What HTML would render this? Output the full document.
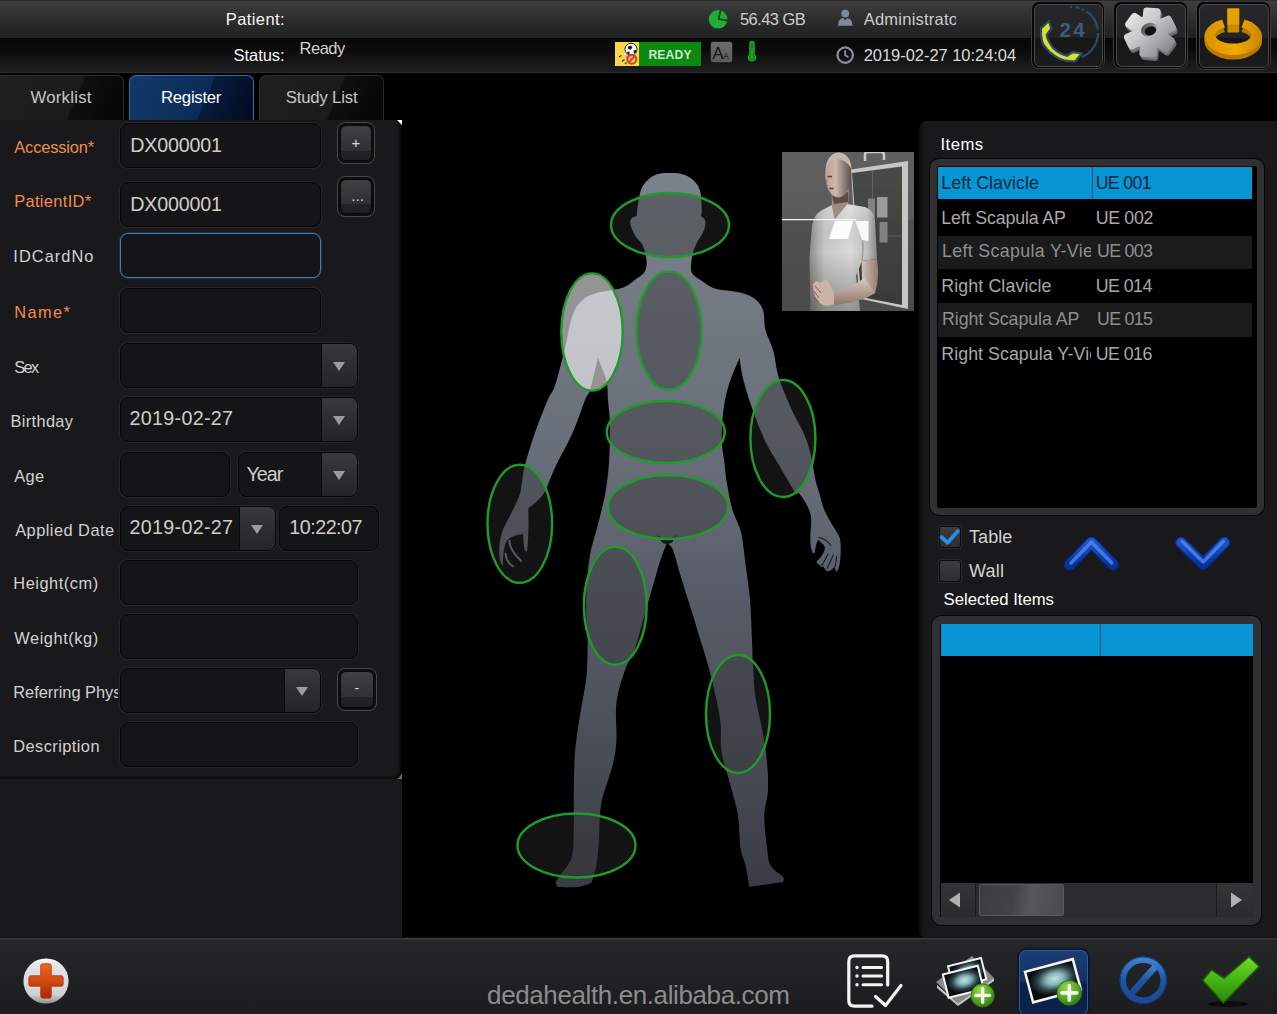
<!DOCTYPE html>
<html lang="en">
<head>
<meta charset="utf-8">
<title>Register</title>
<style>
html,body{margin:0;padding:0;background:#000;}
body{width:1277px;height:1014px;position:relative;overflow:hidden;font-family:"Liberation Sans","DejaVu Sans",sans-serif;color:#d8d8d8;}
.abs{position:absolute;}
.t{position:absolute;white-space:nowrap;}
#topbar{left:0;top:0;width:1277px;height:73px;background:linear-gradient(#2a2a2a 0,#2a2a2a 1px,#3e3e3e 1.5px,#363636 10px,#2b2c2c 20px,#202322 37.5px,#080808 38px,#0b0b0b 50px,#151515 60px,#1f1f1f 72px,#2c2c2c 72.5px);}
.tab{position:absolute;top:75px;height:45px;border:1px solid #2c2c2c;border-bottom:none;border-radius:7px 7px 0 0;box-sizing:border-box;background:linear-gradient(113deg,#202020 0,#1b1b1b 60%,#0f0f0f 60.5%,#050505 100%);}
.tab.sel{background:linear-gradient(113deg,#113a68 0,#0b2c58 60%,#061c3e 60.5%,#020b1e 100%);border-color:#2c6fae;}
#left{left:0;top:120px;width:401px;height:659px;background:#19191b;border-radius:0 0 6px 0;box-shadow:inset -2px -2px 3px rgba(0,0,0,.55);}
#leftlow{left:0;top:779px;width:402px;height:159px;background:#1a1a1c;}
#right{left:919px;top:121px;width:358px;height:817px;background:linear-gradient(90deg,#0c0c0d 0,#151517 3px,#19191b 8px);border-radius:8px 0 0 7px;}
#bottom{left:0;top:937px;width:1277px;height:77px;background:linear-gradient(#101011 0,#101011 1px,#3a3a3c 1px,#3a3a3c 2px,#252628 3px,#222325 30px,#1c1c1e 77px);}
.inp{position:absolute;box-sizing:border-box;background:#151517;border:1px solid #060606;border-radius:8px;box-shadow:0 0 0 1px #262628;overflow:hidden;}
.arrow{position:absolute;right:0;top:0;bottom:0;width:35px;background:linear-gradient(#39393b,#2e2e30 50%,#252527);border-left:1px solid #0a0a0a;}
.arrow:after{content:"";position:absolute;left:50%;top:50%;margin:-4px 0 0 -6.5px;border:6.5px solid transparent;border-top:9px solid #9c9c9c;border-bottom:none;}
.sbtn{position:absolute;box-sizing:border-box;border:1px solid #48484a;border-radius:8px;background:#0e0e0f;}
.sbtn i{position:absolute;left:2px;top:2px;right:2px;bottom:2px;border-radius:6px;background:linear-gradient(#404043 0,#303032 72%,#232325 73%,#202022 100%);border:1px solid #080808;}
.lbox{position:absolute;box-sizing:border-box;border:7px solid #2f3032;border-radius:9px;background:#000;box-shadow:0 0 0 1px #060606;}
.chk{position:absolute;width:22px;height:22px;box-sizing:border-box;border:1px solid #0b0b0b;border-radius:3px;background:linear-gradient(#3c3c3e,#2e2e30);box-shadow:0 0 0 1px #2a2a2c;}
.tbtn{position:absolute;top:1px;width:74px;height:68px;box-sizing:border-box;border:1px solid #3c3c3e;border-radius:8px;background:#060606;}
.tbtn i{position:absolute;left:1.5px;top:1.5px;right:1.5px;bottom:1.5px;border-radius:6px;border:1px solid #48484a;background:linear-gradient(#272729 0,#232325 53%,#171718 54%,#1b1b1c 100%);}
</style>
</head>
<body>
<div class="abs" id="topbar"></div>
<div class="t" style="left:225.80px;top:10.73px;font-size:16.5px;line-height:1;letter-spacing:0.404px;color:#f6f6f6;">Patient:</div><div class="t" style="left:233.60px;top:46.93px;font-size:16.5px;line-height:1;letter-spacing:-0.063px;color:#f6f6f6;">Status:</div><div class="t" style="left:299.60px;top:40.03px;font-size:16.5px;line-height:1;letter-spacing:-0.511px;color:#d0d0d0;">Ready</div><div class="t" style="left:740.00px;top:10.83px;font-size:16.5px;line-height:1;letter-spacing:-0.573px;color:#cdcdcd;">56.43 GB</div><div class="t" style="left:863.70px;top:10.73px;font-size:16.5px;line-height:1;letter-spacing:0.236px;color:#cdcdcd;width:92.1px;overflow:hidden;padding-bottom:6px;">Administrator</div><div class="t" style="left:863.70px;top:46.83px;font-size:16.5px;line-height:1;letter-spacing:-0.041px;color:#dadada;">2019-02-27 10:24:04</div>
<svg class="abs" style="left:706px;top:7px" width="26" height="26" viewBox="0 0 26 26"><circle cx="12.1" cy="12.3" r="9.3" fill="#1cae35"/><path d="M12.6 12 L14.4 3.6 M12.6 12 L21.4 13.6" stroke="#0d3a14" stroke-width="1.7" fill="none"/></svg>
<svg class="abs" style="left:835px;top:6px" width="22" height="24" viewBox="0 0 22 24"><circle cx="10.2" cy="7.6" r="3.9" fill="#7f879a"/><path d="M3 19.8 C3 13.5 6 12 10.2 12 C14.5 12 17.4 13.5 17.4 19.8Z" fill="#7f879a"/><path d="M8.3 12 L10.2 14.4 L12.1 12Z" fill="#2a2a2a"/></svg>
<div class="abs" style="left:615px;top:42px;width:24px;height:24px;background:#f8d848;"></div>
<div class="abs" style="left:639px;top:42px;width:62px;height:24px;background:#0c8a10;"></div>
<svg class="abs" style="left:615px;top:42px" width="25" height="24" viewBox="0 0 25 24"><path d="M4 15 L6.5 13.5 M7 19.5 L9.5 17.5 M10 22 L11.5 20.5" stroke="#3a2a10" stroke-width="1.1"/><path d="M9 12 L13 10 L13 16Z" fill="#fff"/><ellipse cx="14.5" cy="14.5" rx="4.2" ry="3.8" fill="#f2a8b0"/><circle cx="16" cy="7.2" r="6" fill="#fafafa" stroke="#222" stroke-width="1"/><path d="M13 4.5 l3 -1 l1.5 2.2 l-2 2 l-2.5 -1Z M18.5 8.5 l2.5 -.5 l.3 2.5 l-2.3 1Z M12 10 l2 -.5 l1 2 l-2 .8Z" fill="#1a1a1a"/><circle cx="16.8" cy="17.2" r="4.5" fill="none" stroke="#dc3a1c" stroke-width="1.9"/><path d="M13.7 20.3 L19.9 14.1" stroke="#dc3a1c" stroke-width="1.9"/></svg>
<div class="t" style="left:648.40px;top:48.51px;font-size:12.1px;line-height:1;letter-spacing:0.183px;color:#cfe8cf;font-weight:bold;">READY</div>
<div class="abs" style="left:711px;top:42px;width:20.500px;height:20px;background:linear-gradient(#6c6c6c,#5c5c5c);border-radius:2px;box-shadow:0 0 0 .5px #3a3a3a;"></div>
<div class="t" style="left:712.500px;top:44px;font-size:16.500px;color:#141414;line-height:18px;">A<span style="font-size:8.500px;margin-left:-.5px;">A</span></div>
<svg class="abs" style="left:745px;top:40px" width="14" height="24" viewBox="0 0 14 24"><path d="M5 3.5 a2 2 0 0 1 4 0 V14.5 a3.6 3.6 0 1 1 -4 0Z" fill="#117a1a" stroke="#17a523" stroke-width="1.5"/><path d="M7 8 V17" stroke="#17a523" stroke-width="1.6"/><circle cx="7" cy="17.6" r="1.8" fill="#17a523"/></svg>
<svg class="abs" style="left:834px;top:44px" width="22" height="22" viewBox="0 0 22 22"><circle cx="11.2" cy="11.1" r="7.7" fill="none" stroke="#8c919b" stroke-width="2.2"/><path d="M11.2 6.3 V11.3 L14.5 13.3" fill="none" stroke="#8c919b" stroke-width="1.8"/></svg>
<div class="tbtn" style="left:1031px;"><i></i></div>
<div class="tbtn" style="left:1113px;width:75px;"><i></i></div>
<div class="tbtn" style="left:1196px;width:75px;height:69px;"><i></i></div>

<svg class="abs" style="left:1031px;top:2px" width="73" height="67" viewBox="0 0 73 67"><g fill="none" stroke="#2f4b6b" stroke-width="2.2"><path d="M39 5.1 A26 26 0 0 1 41 5" stroke-dasharray="2 2"/><path d="M44.5 5.2 A26 26 0 0 1 53 8" stroke-dasharray="4 2.5"/><path d="M55.5 9.4 A26 26 0 0 1 66.8 27.5"/><path d="M67 31 A26 26 0 0 1 51 55"/></g><path d="M17.8 19 L20.3 26.4 L15.7 32.8 Q16 38 22.4 46.3 Q29 52 35.9 53.8 L41.6 50.2 L50.8 51.3 L44.5 59.1 Q39 59.5 34.5 58.7 Q28 57 23.9 54.1 Q18 50 15.3 46.3 Q12 43 11.1 39.9 Q9.5 33 10 26.400Z" fill="#d7e02c" stroke="#2f4b6b" stroke-width="2.2" stroke-linejoin="round"/><text x="28.6" y="35.3" font-family="Liberation Sans,sans-serif" font-weight="bold" font-size="20.5" fill="#3d5a80" letter-spacing="2.2">24</text></svg>
<svg class="abs" style="left:1114px;top:2px" width="73" height="67" viewBox="0 0 73 67"><defs><linearGradient id="gg" x1="8" y1="4" x2="62" y2="58" gradientUnits="userSpaceOnUse"><stop offset="0" stop-color="#f6f6f6"/><stop offset=".45" stop-color="#c6c6c8"/><stop offset="1" stop-color="#727276"/></linearGradient><linearGradient id="gh" x1="0" y1="0" x2="1" y2="1"><stop offset="0" stop-color="#3a3a3c"/><stop offset="1" stop-color="#c8c8c8"/></linearGradient><clipPath id="gc"><ellipse cx="36" cy="30.5" rx="18" ry="17.1"/><rect x="-8.7" y="-26" width="17.4" height="14" rx="3.4" transform="translate(36 30.5) scale(1 .95) rotate(65)"/><rect x="-8.7" y="-26" width="17.4" height="14" rx="3.4" transform="translate(36 30.5) scale(1 .95) rotate(125)"/><rect x="-8.7" y="-26" width="17.4" height="14" rx="3.4" transform="translate(36 30.5) scale(1 .95) rotate(185)"/><rect x="-8.7" y="-26" width="17.4" height="14" rx="3.4" transform="translate(36 30.5) scale(1 .95) rotate(245)"/><rect x="-8.7" y="-26" width="17.4" height="14" rx="3.4" transform="translate(36 30.5) scale(1 .95) rotate(305)"/><rect x="-8.7" y="-26" width="17.4" height="14" rx="3.4" transform="translate(36 30.5) scale(1 .95) rotate(365)"/></clipPath></defs><g transform="translate(1.6 3.4)"><rect width="73" height="67" fill="#66666a" clip-path="url(#gc)"/></g><g transform="translate(.8 1.7)"><rect width="73" height="67" fill="#7c7c80" clip-path="url(#gc)"/></g><rect width="73" height="67" fill="url(#gg)" clip-path="url(#gc)"/><ellipse cx="35.2" cy="27.6" rx="8.4" ry="6.6" fill="url(#gh)" transform="rotate(-20 35.2 27.6)"/><ellipse cx="36.4" cy="28.8" rx="6" ry="4.4" fill="#111" transform="rotate(-20 36.4 28.8)"/></svg>
<svg class="abs" style="left:1197px;top:2px" width="73" height="67" viewBox="0 0 73 67"><defs><linearGradient id="pg" x1="0" y1="0" x2="1" y2="0"><stop offset="0" stop-color="#d89400"/><stop offset=".55" stop-color="#f2a800"/><stop offset="1" stop-color="#c88600"/></linearGradient></defs><path d="M25 17.5 A28.8 18.5 0 1 0 47.5 17.5 L44.5 25.5 A18 8.5 0 1 1 28 25.5Z" transform="translate(0 4.5)" fill="#b87a00"/><path d="M25 17.5 A28.8 18.5 0 1 0 47.5 17.5 L44.5 25.5 A18 8.5 0 1 1 28 25.5Z" fill="url(#pg)"/><rect x="30.4" y="6.5" width="11.8" height="24" fill="#c88a00"/><rect x="30.4" y="6.5" width="11.8" height="16" fill="#e6a000"/></svg>

<div class="tab" style="left:-1px;width:125px;border-radius:0 7px 0 0;"></div>
<div class="tab sel" style="left:129px;width:125px;"></div>
<div class="tab" style="left:259px;width:125px;"></div>
<div class="t" style="left:30.40px;top:89.58px;font-size:16.8px;line-height:1;letter-spacing:0.244px;color:#c6c6c6;">Worklist</div><div class="t" style="left:161.00px;top:89.58px;font-size:16.8px;line-height:1;letter-spacing:-0.300px;color:#ffffff;">Register</div><div class="t" style="left:285.70px;top:89.58px;font-size:16.8px;line-height:1;letter-spacing:-0.192px;color:#c6c6c6;">Study List</div><div class="abs" id="leftlow"></div><div class="abs" style="left:396px;top:774px;width:6px;height:5px;background:linear-gradient(135deg,#000 50%,#6a6a6a 51%);"></div><div class="abs" id="left"></div>
<div class="abs" style="left:397px;top:120px;width:0;height:0;border-top:5px solid #fff;border-left:5px solid transparent;"></div>
<div class="t" style="left:14.30px;top:138.92px;font-size:16.4px;line-height:1;letter-spacing:-0.134px;color:#f08c4c;">Accession*</div>
<div class="t" style="left:14.20px;top:192.92px;font-size:16.4px;line-height:1;letter-spacing:0.353px;color:#f08c4c;">PatientID*</div>
<div class="t" style="left:13.30px;top:248.32px;font-size:16.4px;line-height:1;letter-spacing:1.035px;color:#d2d2d2;">IDCardNo</div>
<div class="t" style="left:14.20px;top:303.82px;font-size:16.4px;line-height:1;letter-spacing:1.395px;color:#f08c4c;">Name*</div>
<div class="t" style="left:14.30px;top:358.92px;font-size:16.4px;line-height:1;letter-spacing:-1.624px;color:#d2d2d2;">Sex</div>
<div class="t" style="left:10.50px;top:412.92px;font-size:16.4px;line-height:1;letter-spacing:0.338px;color:#d2d2d2;">Birthday</div>
<div class="t" style="left:14.30px;top:468.32px;font-size:16.4px;line-height:1;letter-spacing:0.326px;color:#d2d2d2;">Age</div>
<div class="t" style="left:15.20px;top:522.12px;font-size:16.4px;line-height:1;letter-spacing:0.460px;color:#d2d2d2;">Applied Date</div>
<div class="t" style="left:13.30px;top:575.42px;font-size:16.4px;line-height:1;letter-spacing:0.524px;color:#d2d2d2;">Height(cm)</div>
<div class="t" style="left:14.30px;top:629.62px;font-size:16.4px;line-height:1;letter-spacing:0.546px;color:#d2d2d2;">Weight(kg)</div>
<div class="t" style="left:13.30px;top:737.52px;font-size:16.4px;line-height:1;letter-spacing:0.423px;color:#d2d2d2;">Description</div>
<div class="t" style="left:13.30px;top:683.92px;font-size:16.4px;line-height:1;letter-spacing:-0.026px;color:#d2d2d2;width:104.9px;overflow:hidden;padding-bottom:6px;">Referring Physician</div>
<div class="inp" style="left:120px;top:123px;width:201px;height:45px;"></div>
<div class="inp" style="left:120px;top:182px;width:201px;height:45px;"></div>
<div class="inp" style="left:120px;top:233px;width:201px;height:45px;border-color:#3d7fb8;box-shadow:0 0 0 1px #1d3044;"></div>
<div class="inp" style="left:120px;top:288px;width:201px;height:45px;"></div>
<div class="inp" style="left:120px;top:343px;width:238px;height:45px;"><div class="arrow"></div></div>
<div class="inp" style="left:120px;top:397px;width:238px;height:45px;"><div class="arrow"></div></div>
<div class="inp" style="left:120px;top:452px;width:110px;height:45px;"></div>
<div class="inp" style="left:238px;top:452px;width:120px;height:45px;"><div class="arrow"></div></div>
<div class="inp" style="left:120px;top:506px;width:156px;height:45px;"><div class="arrow"></div></div>
<div class="inp" style="left:279px;top:506px;width:100px;height:45px;"></div>
<div class="inp" style="left:120px;top:560px;width:238px;height:45px;"></div>
<div class="inp" style="left:120px;top:614px;width:238px;height:45px;"></div>
<div class="inp" style="left:120px;top:668px;width:201px;height:45px;"><div class="arrow"></div></div>
<div class="inp" style="left:120px;top:722px;width:238px;height:45px;"></div>
<div class="t" style="left:130.30px;top:136.22px;font-size:19.7px;line-height:1;letter-spacing:-0.214px;color:#cfcdc8;">DX000001</div><div class="t" style="left:130.30px;top:194.82px;font-size:19.7px;line-height:1;letter-spacing:-0.214px;color:#cfcdc8;">DX000001</div><div class="t" style="left:129.50px;top:409.12px;font-size:19.7px;line-height:1;letter-spacing:0.305px;color:#cfcdc8;">2019-02-27</div><div class="t" style="left:246.40px;top:464.72px;font-size:19.7px;line-height:1;letter-spacing:-0.941px;color:#cfcdc8;">Year</div><div class="t" style="left:129.50px;top:518.22px;font-size:19.7px;line-height:1;letter-spacing:0.305px;color:#cfcdc8;">2019-02-27</div><div class="t" style="left:289.20px;top:518.22px;font-size:19.7px;line-height:1;letter-spacing:-0.469px;color:#cfcdc8;">10:22:07</div><div class="sbtn" style="left:337px;top:122px;width:38px;height:42px;"><i></i></div>
<div class="sbtn" style="left:337px;top:176px;width:38px;height:41px;"><i></i></div>
<div class="sbtn" style="left:337px;top:668px;width:40px;height:43px;"><i></i></div>
<div class="t" style="left:351.5px;top:135px;font-size:15px;color:#ddd;line-height:1;">+</div><div class="t" style="left:351.5px;top:189px;font-size:14px;color:#ddd;line-height:1;letter-spacing:0.3px;">...</div><div class="t" style="left:354.5px;top:681px;font-size:14px;color:#ddd;line-height:1;">-</div>
<svg class="abs" style="left:402px;top:122px" width="516" height="816" viewBox="402 122 516 816">
<defs><linearGradient id="bg" x1="0" y1="172" x2="0" y2="888" gradientUnits="userSpaceOnUse"><stop offset="0.004" stop-color="#7a828b"/><stop offset="0.207" stop-color="#727882"/><stop offset="0.388" stop-color="#696f7a"/><stop offset="0.514" stop-color="#606470"/><stop offset="0.598" stop-color="#565b67"/><stop offset="0.751" stop-color="#4e525d"/><stop offset="0.863" stop-color="#444852"/><stop offset="0.996" stop-color="#393c43"/></linearGradient></defs>
<path d="M701.0 216.5C701.5 216.9 703.6 217.6 704.3 218.8C705.0 220.1 705.6 221.7 705.4 224.0C705.2 226.3 704.5 229.3 703.0 232.6C701.5 235.9 698.3 239.7 696.5 243.6C694.7 247.5 693.1 251.3 692.3 256.0C691.5 260.7 690.0 267.8 691.6 272.0C693.2 276.2 698.1 278.2 702.0 281.0C705.9 283.8 708.7 286.6 715.0 288.5C721.3 290.4 733.3 290.8 740.0 292.5C746.7 294.2 751.2 296.1 755.0 299.0C758.8 301.9 761.2 304.8 763.0 310.0C764.8 315.2 763.8 323.3 765.5 330.0C767.2 336.7 770.9 342.5 773.0 350.0C775.1 357.5 776.1 367.8 778.0 375.0C779.9 382.2 782.1 386.8 784.6 393.0C787.1 399.2 789.8 405.7 793.0 412.5C796.2 419.3 801.1 427.1 804.0 434.0C806.9 440.9 808.7 446.0 810.6 453.7C812.5 461.4 814.0 473.4 815.5 480.0C817.0 486.6 817.9 488.3 819.3 493.0C820.6 497.7 821.8 503.5 823.6 508.2C825.4 512.9 828.0 517.2 830.2 521.2C832.4 525.2 835.1 529.2 836.7 532.1C838.3 535.0 839.2 535.7 839.9 538.6C840.6 541.5 840.8 545.5 840.8 549.5C840.8 553.5 840.4 559.0 839.9 562.5C839.4 566.0 838.4 568.8 837.8 570.3C837.2 571.8 836.5 571.3 836.3 571.5C836.1 571.1 835.3 569.8 835.0 569.0C834.7 568.2 834.6 567.2 834.5 566.8C834.0 567.3 832.5 569.3 831.2 570.1C829.9 570.9 827.6 571.2 826.9 571.4C826.6 571.1 825.9 570.4 825.3 569.6C824.7 568.8 823.6 567.0 823.3 566.5C822.9 566.6 821.3 566.9 820.9 567.0C820.7 566.7 820.1 565.5 819.9 565.2C819.5 565.0 818.1 564.0 817.7 563.8C817.5 563.5 816.0 563.3 816.6 562.0C817.2 560.7 820.1 558.1 821.5 556.0C822.9 553.9 824.4 551.3 824.7 549.5C825.1 547.7 824.7 546.7 823.6 545.1C822.5 543.5 819.1 540.6 818.2 539.7C817.8 540.6 816.6 543.1 816.0 545.1C815.4 547.1 815.2 550.6 814.8 552.0C814.4 553.4 813.8 553.3 813.4 553.3C813.0 553.3 812.5 552.2 812.3 552.0C812.0 550.9 810.9 548.1 810.6 545.1C810.3 542.1 810.3 537.9 810.4 534.3C810.5 530.7 811.2 526.7 811.2 523.4C811.2 520.1 811.4 518.0 810.6 514.7C809.8 511.5 808.3 507.5 806.3 503.9C804.3 500.3 800.5 494.9 798.7 493.0C796.9 491.1 798.5 497.2 795.4 492.8C792.3 488.4 785.1 475.5 780.0 466.8C774.9 458.1 769.7 450.5 765.0 440.7C760.3 430.9 755.6 418.1 752.0 408.0C748.4 397.9 745.5 388.3 743.4 380.0C741.3 371.7 740.1 361.7 739.5 358.0C738.0 361.7 732.9 373.0 730.5 380.0C728.1 387.0 726.4 392.5 725.0 400.0C723.6 407.5 722.5 417.5 722.0 425.0C721.5 432.5 721.6 438.7 722.0 445.0C722.4 451.3 723.6 456.2 724.4 462.7C725.2 469.2 725.6 476.1 727.0 484.0C728.4 491.9 730.2 502.0 732.5 510.0C734.8 518.0 738.8 523.0 741.0 532.0C743.2 541.0 744.0 552.7 745.5 564.0C747.0 575.3 748.9 587.3 750.0 600.0C751.1 612.7 751.5 629.2 752.0 640.0C752.5 650.8 752.4 655.4 753.0 665.0C753.6 674.6 754.0 687.1 755.5 697.6C757.0 708.1 759.9 717.3 761.8 727.7C763.7 738.1 765.8 749.5 766.8 760.0C767.8 770.5 768.4 781.2 768.0 790.4C767.6 799.6 764.5 806.2 764.3 815.4C764.1 824.6 765.8 837.1 766.8 845.5C767.8 853.9 767.9 860.4 770.6 865.6C773.3 870.8 780.9 874.1 783.0 876.8C785.1 879.5 783.0 881.1 783.0 882.0C780.1 882.4 771.2 883.7 765.6 884.5C760.0 885.3 752.0 886.6 749.3 887.0C748.7 883.4 747.0 872.1 745.5 865.6C744.0 859.1 741.8 856.4 740.5 848.0C739.2 839.6 739.7 825.8 738.0 815.4C736.3 805.0 733.2 795.8 730.5 785.4C727.8 775.0 723.4 763.2 721.7 752.8C720.0 742.3 721.5 732.3 720.5 722.7C719.5 713.1 717.5 704.6 715.4 695.0C713.3 685.4 710.5 674.2 708.0 665.0C705.5 655.8 702.9 648.2 700.4 640.0C697.9 631.8 696.3 626.3 693.0 615.5C689.7 604.7 683.8 586.3 680.5 575.4C677.2 564.5 675.2 555.4 673.0 550.0C670.8 544.6 668.0 544.2 667.0 543.0C665.9 545.8 662.8 552.9 660.5 560.0C658.2 567.1 655.9 575.4 653.0 585.5C650.1 595.6 646.1 609.9 643.0 620.6C639.9 631.4 637.5 641.8 634.5 650.0C631.5 658.2 628.0 661.2 625.0 670.0C622.0 678.8 617.8 691.0 616.4 702.7C615.0 714.4 617.0 729.6 616.4 740.0C615.8 750.4 615.2 754.5 612.7 765.0C610.2 775.5 603.7 790.4 601.4 803.0C599.1 815.6 599.7 830.1 598.9 840.5C598.1 850.9 597.6 858.5 596.4 865.6C595.1 872.7 592.2 880.1 591.4 883.0C589.1 883.7 583.2 886.3 577.6 887.0C572.0 887.7 560.9 887.0 557.5 887.0C557.3 885.9 554.6 884.2 556.3 880.6C558.0 877.0 564.9 870.2 567.6 865.6C570.3 861.0 571.6 859.3 572.6 853.0C573.6 846.7 573.6 838.4 573.8 828.0C574.0 817.6 573.6 802.9 573.8 790.4C574.0 777.9 574.0 765.4 575.0 752.8C576.0 740.2 578.1 727.5 580.0 715.0C581.9 702.5 585.1 690.1 586.4 677.6C587.7 665.1 587.6 648.7 587.6 640.0C587.6 631.3 586.7 633.9 586.5 625.6C586.3 617.4 585.9 602.3 586.5 590.5C587.1 578.7 588.1 565.9 590.0 555.0C591.9 544.1 595.3 535.0 597.8 525.0C600.3 515.0 603.1 505.4 605.0 495.0C606.9 484.6 608.2 474.4 609.0 462.7C609.8 451.0 610.2 435.4 610.0 425.0C609.8 414.6 608.6 407.4 608.0 400.0C607.4 392.6 608.1 387.5 606.4 380.5C604.7 373.5 599.4 361.8 598.0 358.0C596.7 363.3 592.2 383.0 590.0 390.0C587.8 397.0 587.9 392.9 585.0 400.0C582.1 407.1 577.7 421.3 572.7 432.6C567.7 443.9 559.6 458.0 555.0 467.7C550.4 477.4 548.2 485.2 545.1 490.9C542.0 496.6 539.2 498.8 536.4 501.7C533.6 504.6 529.6 507.1 528.3 508.2C528.3 510.4 528.5 516.9 528.5 521.2C528.5 525.6 528.5 529.7 528.3 534.3C528.1 538.9 527.8 546.1 527.4 549.0C527.0 551.9 526.2 551.7 525.6 551.4C525.0 551.1 524.4 550.2 524.0 547.3C523.6 544.4 523.3 536.2 523.2 534.0C522.0 534.2 518.3 534.5 515.8 535.4C513.3 536.3 510.1 537.2 508.2 539.2C506.3 541.2 505.2 544.5 504.4 547.3C503.6 550.1 503.6 552.9 503.3 556.0C503.0 559.1 502.9 564.3 502.8 566.0C502.4 565.4 501.2 564.5 500.6 562.5C500.0 560.5 499.4 557.4 499.3 553.8C499.2 550.2 499.3 545.0 500.0 540.8C500.7 536.6 501.8 532.8 503.3 528.8C504.9 524.8 507.2 521.0 509.3 516.9C511.4 512.8 514.0 507.9 515.8 503.9C517.6 499.9 519.1 497.0 520.2 493.0C521.3 489.0 521.5 484.7 522.3 480.0C523.1 475.3 522.9 472.9 525.0 465.0C527.1 457.1 531.2 443.4 535.0 432.6C538.8 421.8 544.4 407.8 547.7 400.0C551.0 392.2 552.1 394.3 555.0 385.6C557.9 376.9 562.1 359.8 565.0 348.0C567.9 336.2 569.7 323.0 572.6 315.0C575.5 307.0 578.4 303.7 582.6 300.0C586.8 296.3 590.9 294.8 597.6 292.8C604.3 290.8 616.3 290.1 622.7 287.8C629.1 285.5 632.3 281.7 636.0 279.0C639.7 276.3 643.0 274.7 644.8 271.5C646.5 268.3 646.9 264.4 646.5 260.0C646.1 255.6 644.2 248.8 642.5 245.0C640.8 241.2 637.8 239.8 636.0 237.0C634.2 234.2 632.5 230.6 631.5 228.0C630.5 225.4 630.1 223.2 630.2 221.5C630.3 219.8 630.9 219.0 632.0 218.0C633.1 217.0 636.2 216.1 637.0 215.7C637.0 214.8 636.7 213.8 637.2 210.0C637.7 206.2 638.9 197.1 640.2 192.6C641.5 188.1 642.5 185.9 645.0 183.0C647.5 180.1 650.8 176.7 655.0 175.0C659.2 173.3 665.0 173.0 670.0 173.0C675.0 173.0 680.7 173.3 685.0 175.0C689.3 176.7 693.4 180.0 696.0 183.0C698.6 186.0 699.5 188.5 700.5 193.0C701.5 197.5 701.6 206.1 701.7 210.0C701.8 213.9 701.1 215.4 701.0 216.5Z" fill="url(#bg)"/>
<g fill="none" stroke="#70757e" stroke-width="2" stroke-linecap="round"><path d="M509.3 540.8 Q510 551 521.2 560.9"/><path d="M505.5 553.8 Q506 562 513.1 566.3"/></g>
<g fill="none" stroke="#181a1e" stroke-width="1.1" stroke-linecap="round"><path d="M819 537.5 Q826 539 831 545.5"/><path d="M828 554 L822 565.5"/><path d="M833.3 555 L827.2 568.5"/><path d="M836.7 556.5 L835.2 566.5"/></g>
<path d="M657 534.5 L664 540 L667 538.5 L670 540 L677 534.5 L672 542.5 L667 544.5 L662 542.5Z" fill="#14161a"/>
<ellipse cx="670" cy="225" rx="59" ry="32" fill="rgba(48,48,48,0.39)" stroke="#209b2a" stroke-width="2.4"/>
<ellipse cx="669" cy="330.6" rx="32.5" ry="59" fill="rgba(48,48,48,0.39)" stroke="#209b2a" stroke-width="2.4"/>
<ellipse cx="665.8" cy="432" rx="59" ry="31" fill="rgba(48,48,48,0.39)" stroke="#209b2a" stroke-width="2.4"/>
<ellipse cx="668" cy="507" rx="60" ry="32" fill="rgba(48,48,48,0.39)" stroke="#209b2a" stroke-width="2.4"/>
<ellipse cx="519.8" cy="523.8" rx="32.3" ry="59" fill="rgba(48,48,48,0.39)" stroke="#209b2a" stroke-width="2.4"/>
<ellipse cx="782.9" cy="438.5" rx="32.5" ry="58.5" fill="rgba(48,48,48,0.39)" stroke="#209b2a" stroke-width="2.4"/>
<ellipse cx="615.3" cy="605.8" rx="31.4" ry="59" fill="rgba(48,48,48,0.39)" stroke="#209b2a" stroke-width="2.4"/>
<ellipse cx="738" cy="714" rx="32" ry="59" fill="rgba(48,48,48,0.39)" stroke="#209b2a" stroke-width="2.4"/>
<ellipse cx="576.5" cy="845.5" rx="59" ry="32" fill="rgba(48,48,48,0.39)" stroke="#209b2a" stroke-width="2.4"/>
<ellipse cx="592" cy="332" rx="30.7" ry="58.6" fill="rgba(255,255,255,0.58)" stroke="#209b2a" stroke-width="2.4"/>
</svg>
<svg class="abs" style="left:782px;top:152px" width="132" height="159" viewBox="0 0 132 159">
<defs>
<linearGradient id="tbg" x1="0" y1="0" x2="0" y2="1"><stop offset="0" stop-color="#5f5f5f"/><stop offset=".42" stop-color="#5b5b5b"/><stop offset=".43" stop-color="#505050"/><stop offset="1" stop-color="#4b4b4b"/></linearGradient>
<linearGradient id="tsh" x1="0" y1="0" x2="1" y2="0"><stop offset="0" stop-color="#8e8e8c"/><stop offset=".22" stop-color="#c9c9c7"/><stop offset=".6" stop-color="#dadad8"/><stop offset=".85" stop-color="#c4c4c2"/><stop offset="1" stop-color="#8a8a88"/></linearGradient>
<linearGradient id="tsv" x1="0" y1="0" x2="0" y2="1"><stop offset="0" stop-color="#fff" stop-opacity=".15"/><stop offset=".45" stop-color="#000" stop-opacity="0"/><stop offset="1" stop-color="#000" stop-opacity=".32"/></linearGradient>
<linearGradient id="tsk" x1="0" y1="0" x2="1" y2="0"><stop offset="0" stop-color="#b9a396"/><stop offset=".4" stop-color="#cbb7ab"/><stop offset="1" stop-color="#5e4e48"/></linearGradient>
<linearGradient id="tarm" x1="0" y1="0" x2="0" y2="1"><stop offset="0" stop-color="#dccbc2"/><stop offset="1" stop-color="#8d7468"/></linearGradient>
<linearGradient id="tua" x1="0" y1="0" x2="1" y2="0"><stop offset="0" stop-color="#d4c2b8"/><stop offset="1" stop-color="#93796d"/></linearGradient>
<linearGradient id="tpn" x1="0" y1="0" x2="0" y2="1"><stop offset="0" stop-color="#484a46"/><stop offset="1" stop-color="#383a37"/></linearGradient><filter id="tbl" x="-5%" y="-5%" width="110%" height="110%"><feGaussianBlur stdDeviation="0.55"/></filter>
<clipPath id="tcl"><rect width="132" height="159"/></clipPath>
</defs>
<rect width="132" height="159" fill="url(#tbg)"/>
<g clip-path="url(#tcl)"><g filter="url(#tbl)">
<path d="M83 9 v-6 q0 -3 3 -3 h13 q3 0 3 3 v5" fill="none" stroke="#c9c9c9" stroke-width="2.6"/>
<path d="M69 17.5 L126 9 L126 157 L77 146.5Z" fill="#c6c6c4"/>
<path d="M70 21 L120 14.5 L120 153 L79 145Z" fill="url(#tpn)"/>
<path d="M90.6 19 V62 M104 84 H120" stroke="#6a6a68" stroke-width=".8"/>
<rect x="86" y="46.5" width="7" height="19" fill="#82827f"/><rect x="95" y="45" width="10.5" height="20.5" fill="#9a9a97"/><rect x="97.5" y="70" width="8" height="20.5" fill="#82827f"/>
<path d="M49.5 38 L50 56 L53 66 L66 54 L67 36Z" fill="#a08a7e"/>
<path d="M50 44 L66 40 L66 50 L52 52Z" fill="#5e4c44"/>
<ellipse cx="56.3" cy="23" rx="13" ry="22.5" fill="url(#tsk)"/>
<path d="M43.5 19 Q44 2 57 .5 Q69 2 69.5 17 Q62 5 52 7 Q46 9 43.5 19Z" fill="#c2b8b0"/>
<path d="M45.5 24.5 h4.5 M47.5 36.5 h4" stroke="#5a3c34" stroke-width="1.3"/>
<path d="M45 27 L44 33 L46.5 33.5" fill="none" stroke="#8a6a5c" stroke-width=".8"/>
<path d="M39.5 58.5 L50 53 L53 66.5 L65 52 L83 55 Q92 58 93 68 L95 107 L80 109 L74 124 L78 159 L28.5 159 L27.5 105 L30 74 Q32 62 39.5 58.500Z" fill="url(#tsh)"/>
<path d="M39.5 58.5 L50 53 L53 66.5 L65 52 L83 55 Q92 58 93 68 L95 107 L80 109 L74 124 L78 159 L28.5 159 L27.5 105 L30 74 Q32 62 39.5 58.500Z" fill="url(#tsv)"/>
<path d="M50 53 L53 66.5 L65 52" fill="none" stroke="#90908e" stroke-width="1"/>
<path d="M79 72 Q82 95 80 109" fill="none" stroke="#8e8e8c" stroke-width="1.6" opacity=".7"/>
<path d="M0 67.7 H74" stroke="#f6f6f6" stroke-width="1.3"/>
<path d="M53 69 L71 69 L66 87 L47 87Z" fill="#fcfcfc"/><path d="M73.5 69 L86.5 69 L86.5 89 L80 88Z" fill="#f8f8f8"/>
<path d="M79.5 109 L95 107 Q98 125 93 141 Q88 146 80 128Z" fill="url(#tua)"/>
<path d="M93 141 Q80 150 52 153 L50 140 Q70 136 82 126Z" fill="url(#tarm)"/>
<path d="M31 132 Q34 127 38 131 L43 128 Q47 127 48 133 L52 140 L52 152 Q44 156 38 151 Q31 144 31 132Z" fill="#cab3a7"/>
<path d="M33 134 L39 141 M32 139 L37 146 M32 145 L36 150" stroke="#7a5a4c" stroke-width=".9"/>
</g></g>
</svg>
<div class="abs" id="right"></div>
<div class="t" style="left:940.50px;top:136.96px;font-size:16.7px;line-height:1;letter-spacing:0.461px;color:#ffffff;">Items</div><div class="lbox" style="left:930px;top:159px;width:334px;height:356px;"></div>
<div class="abs" style="left:938px;top:167px;width:314px;height:32px;background:#0895d3;"></div><div class="abs" style="left:1091.5px;top:167px;width:1.6px;height:32px;background:#0b5479;"></div>
<div class="abs" style="left:938px;top:235.5px;width:314px;height:33.3px;background:#1b1b1c;"></div><div class="abs" style="left:938px;top:303.4px;width:314px;height:33.3px;background:#1b1b1c;"></div>
<div class="t" style="left:941.30px;top:175.43px;font-size:17.8px;line-height:1;letter-spacing:0.062px;color:#06283c;width:150.1px;overflow:hidden;padding-bottom:6px;">Left Clavicle</div><div class="t" style="left:1095.70px;top:175.43px;font-size:17.8px;line-height:1;letter-spacing:-0.664px;color:#06283c;">UE 001</div>
<div class="t" style="left:941.30px;top:209.73px;font-size:17.8px;line-height:1;letter-spacing:-0.140px;color:#a8a8a8;width:150.1px;overflow:hidden;padding-bottom:6px;">Left Scapula AP</div><div class="t" style="left:1095.70px;top:209.73px;font-size:17.8px;line-height:1;letter-spacing:-0.324px;color:#a8a8a8;">UE 002</div>
<div class="t" style="left:942.00px;top:243.33px;font-size:17.8px;line-height:1;letter-spacing:0.345px;color:#8f8f8f;width:149.4px;overflow:hidden;padding-bottom:6px;">Left Scapula Y-View</div><div class="t" style="left:1097.00px;top:243.33px;font-size:17.8px;line-height:1;letter-spacing:-0.684px;color:#8f8f8f;">UE 003</div>
<div class="t" style="left:941.30px;top:277.73px;font-size:17.8px;line-height:1;letter-spacing:0.107px;color:#a8a8a8;width:150.1px;overflow:hidden;padding-bottom:6px;">Right Clavicle</div><div class="t" style="left:1095.70px;top:277.73px;font-size:17.8px;line-height:1;letter-spacing:-0.524px;color:#a8a8a8;">UE 014</div>
<div class="t" style="left:942.00px;top:311.23px;font-size:17.8px;line-height:1;letter-spacing:-0.074px;color:#8f8f8f;width:149.4px;overflow:hidden;padding-bottom:6px;">Right Scapula AP</div><div class="t" style="left:1097.00px;top:311.23px;font-size:17.8px;line-height:1;letter-spacing:-0.684px;color:#8f8f8f;">UE 015</div>
<div class="t" style="left:941.30px;top:345.53px;font-size:17.8px;line-height:1;letter-spacing:0.051px;color:#a8a8a8;width:150.1px;overflow:hidden;padding-bottom:6px;">Right Scapula Y-View</div><div class="t" style="left:1095.70px;top:345.53px;font-size:17.8px;line-height:1;letter-spacing:-0.524px;color:#a8a8a8;">UE 016</div>

<div class="chk" style="left:939px;top:525.5px;"></div>
<svg class="abs" style="left:936px;top:522px" width="28" height="28" viewBox="936 522 28 28"><path d="M941.6 537.2 L947.6 542.8 L957.8 531.2" fill="none" stroke="#2a8ee0" stroke-width="3.8" stroke-linecap="round" stroke-linejoin="round"/></svg>
<div class="chk" style="left:939px;top:560px;"></div>
<div class="t" style="left:969.00px;top:527.76px;font-size:18px;line-height:1;letter-spacing:0.070px;color:#d2d2d2;">Table</div><div class="t" style="left:969.00px;top:562.36px;font-size:18px;line-height:1;letter-spacing:0.223px;color:#d2d2d2;">Wall</div><div class="t" style="left:943.60px;top:591.66px;font-size:16.7px;line-height:1;letter-spacing:-0.002px;color:#ffffff;">Selected Items</div>
<svg class="abs" style="left:1056px;top:528px" width="184" height="50" viewBox="1056 528 184 50"><defs><linearGradient id="ab" x1="0" y1="0" x2="0" y2="1"><stop offset="0" stop-color="#1d55c8"/><stop offset="1" stop-color="#0b2f9a"/></linearGradient></defs>
<path d="M1069.8 564.6 L1091.4 542.4 L1113 564.6" fill="none" stroke="#0a2684" stroke-width="12" stroke-linecap="round" stroke-linejoin="round"/>
<path d="M1069.8 564.6 L1091.4 542.4 L1113 564.6" fill="none" stroke="url(#ab)" stroke-width="9.6" stroke-linecap="round" stroke-linejoin="round"/>
<path d="M1071 563 L1091.4 542 L1111.8 563" fill="none" stroke="#4f8df0" stroke-width="3.4" stroke-linecap="round" stroke-linejoin="round" opacity=".75"/>
<path d="M1181 542.6 L1203.2 564 L1224.4 542.6" fill="none" stroke="#0a2684" stroke-width="12" stroke-linecap="round" stroke-linejoin="round"/>
<path d="M1181 542.6 L1203.2 564 L1224.4 542.6" fill="none" stroke="url(#ab)" stroke-width="9.6" stroke-linecap="round" stroke-linejoin="round"/>
<path d="M1182 541.4 L1203.2 562 L1223.4 541.4" fill="none" stroke="#4f8df0" stroke-width="3.4" stroke-linecap="round" stroke-linejoin="round" opacity=".75"/></svg>
<div class="lbox" style="left:932px;top:616px;width:329px;height:309px;border-width:8px;"></div>
<div class="abs" style="left:941px;top:623.600px;width:312px;height:32px;background:#0895d3;"></div>
<div class="abs" style="left:1099.500px;top:623.600px;width:1.500px;height:32px;background:#0b5479;"></div>
<div class="abs" style="left:941px;top:882.500px;width:312px;height:34px;background:#2b2c2e;"></div>
<div class="abs" style="left:941px;top:882.500px;width:35px;height:34px;background:linear-gradient(#333436,#2a2b2d);border-right:1px solid #1a1a1a;box-sizing:border-box;"></div>
<div class="abs" style="left:1216px;top:882.500px;width:37px;height:34px;background:linear-gradient(#333436,#2a2b2d);border-left:1px solid #1a1a1a;box-sizing:border-box;"></div>
<div class="abs" style="left:979px;top:883.500px;width:85px;height:32px;background:linear-gradient(100deg,#3c3d3f 0,#424345 40%,#565759 60%,#4a4b4d 100%);border:1px solid #5a5a5c;box-sizing:border-box;border-radius:2px;"></div>
<svg class="abs" style="left:948px;top:891px" width="14" height="18" viewBox="0 0 14 18"><path d="M12 1.5 L12 16.5 L1 9Z" fill="#b0b0b0"/></svg>
<svg class="abs" style="left:1229px;top:891px" width="14" height="18" viewBox="0 0 14 18"><path d="M2 1.5 L2 16.5 L13 9Z" fill="#b0b0b0"/></svg>
<div class="abs" id="bottom"></div>

<svg class="abs" style="left:20px;top:955px" width="52" height="52" viewBox="0 0 52 52"><defs><linearGradient id="rg1" x1="0" y1="0" x2="0" y2="1"><stop offset="0" stop-color="#ffffff"/><stop offset=".12" stop-color="#e4e6e8"/><stop offset=".8" stop-color="#cfd1d3"/><stop offset="1" stop-color="#8e8e90"/></linearGradient><linearGradient id="rc" x1="0" y1="0" x2="0" y2="1"><stop offset="0" stop-color="#ea6a1e"/><stop offset=".5" stop-color="#cf4a10"/><stop offset="1" stop-color="#a82606"/></linearGradient></defs><circle cx="26" cy="26" r="22.6" fill="url(#rg1)"/><path d="M22.7 8.8 h6.6 a2 2 0 0 1 2 2 v9.9 h9.9 a2 2 0 0 1 2 2 v6.6 a2 2 0 0 1 -2 2 h-9.9 v9.9 a2 2 0 0 1 -2 2 h-6.6 a2 2 0 0 1 -2 -2 v-9.9 h-9.9 a2 2 0 0 1 -2 -2 v-6.6 a2 2 0 0 1 2 -2 h9.9 v-9.9 a2 2 0 0 1 2 -2Z" fill="url(#rc)" stroke="#b8380a" stroke-width=".8"/></svg>


<svg class="abs" style="left:843px;top:950px" width="64" height="64" viewBox="843 950 64 64"><path d="M872 1006.2 H854.5 Q848.8 1006.2 848.8 1000.5 V961.6 Q848.8 955.9 854.5 955.9 H882 Q887.7 955.9 887.7 961.6 V985" fill="none" stroke="#f4f4f4" stroke-width="3.2" stroke-linecap="round"/><path d="M875.5 996.5 L885.5 1005.5 L901 985.5" fill="none" stroke="#f4f4f4" stroke-width="3.2" stroke-linecap="round" stroke-linejoin="round"/><path d="M863 967.5 H881.5 M863 976 H881.5 M863 984.8 H881.5" stroke="#f4f4f4" stroke-width="3" stroke-linecap="round"/><circle cx="857" cy="967.5" r="1.7" fill="#f4f4f4"/><circle cx="857" cy="976" r="1.7" fill="#f4f4f4"/><circle cx="857" cy="984.8" r="1.7" fill="#f4f4f4"/></svg>
<svg class="abs" style="left:930px;top:950px" width="72" height="64" viewBox="930 950 72 64"><defs><radialGradient id="gp" cx=".4" cy=".3" r=".8"><stop offset="0" stop-color="#9ad84a"/><stop offset=".6" stop-color="#4ea21e"/><stop offset="1" stop-color="#2a6a10"/></radialGradient><radialGradient id="xr" cx=".55" cy=".45" r=".55"><stop offset="0" stop-color="#c4e2e6"/><stop offset=".35" stop-color="#86b4ba"/><stop offset=".7" stop-color="#2a4044"/><stop offset="1" stop-color="#0a0c0c"/></radialGradient></defs>
<path d="M936 982 L972 956 L994 978 L958 1003Z" fill="#8a8a8a"/><path d="M937 985 L958 1003 L994 978 L994 981 L958 1006 L937 988Z" fill="#c0c0c0"/>
<g transform="rotate(-14 966 972)"><rect x="949" y="961" width="36" height="24" fill="#eee"/><rect x="951" y="963" width="32" height="20" fill="url(#xr)"/></g>
<g transform="rotate(-14 962 981)"><rect x="944" y="969" width="38" height="26" fill="#f2f2f2"/><rect x="946" y="971" width="34" height="22" fill="url(#xr)"/></g>
<circle cx="982.6" cy="995.4" r="11.6" fill="url(#gp)" stroke="#2f7a12" stroke-width="1"/><path d="M982.6 988.5 V1002.3 M975.7 995.4 H989.5" stroke="#f4f8f0" stroke-width="3.4" stroke-linecap="round"/></svg>
<div class="abs" style="left:1017px;top:948px;width:73px;height:70px;box-sizing:border-box;border:2px solid #0a1830;border-radius:9px;background:linear-gradient(#1b3d72 0,#153463 45%,#0a2046 52%,#0c234c 100%);box-shadow:inset 0 0 0 1px #35598f;"></div>
<svg class="abs" style="left:1017px;top:948px" width="73" height="66" viewBox="1017 948 73 66">
<g transform="rotate(-15 1052 981)"><rect x="1027" y="964" width="52" height="34" fill="#f6f6f6"/><rect x="1029.5" y="966.5" width="47" height="29" fill="url(#xr)"/></g>
<circle cx="1069.3" cy="992.9" r="12.3" fill="url(#gp)" stroke="#2f7a12" stroke-width="1"/><path d="M1069.3 985.5 V1000.3 M1061.9 992.9 H1076.7" stroke="#f4f8f0" stroke-width="3.6" stroke-linecap="round"/></svg>
<svg class="abs" style="left:1115px;top:953px" width="56" height="56" viewBox="1115 953 56 56"><defs><linearGradient id="cb" x1="0" y1="0" x2="0" y2="1"><stop offset="0" stop-color="#3f7fd0"/><stop offset=".5" stop-color="#1d55a8"/><stop offset="1" stop-color="#1a4a98"/></linearGradient></defs><circle cx="1143.2" cy="980.2" r="20.4" fill="none" stroke="url(#cb)" stroke-width="6.4"/><path d="M1131 994 L1155.5 966.5" stroke="url(#cb)" stroke-width="6.4"/><circle cx="1143.2" cy="980.2" r="23.2" fill="none" stroke="#123a7a" stroke-width="1"/></svg>
<svg class="abs" style="left:1195px;top:950px" width="76" height="64" viewBox="1195 950 76 64"><defs><linearGradient id="ck" x1="0" y1="0" x2="0" y2="1"><stop offset="0" stop-color="#7ad82a"/><stop offset=".5" stop-color="#44b414"/><stop offset="1" stop-color="#2a8a0c"/></linearGradient></defs><ellipse cx="1228" cy="1004" rx="20" ry="3" fill="#0c0c0c"/><path d="M1202.6 980.2 L1211.6 969.8 L1224 978.1 L1249 956.6 L1259.4 966.3 L1223.4 1003Z" fill="url(#ck)" stroke="#1c5a08" stroke-width="1.6" stroke-linejoin="round"/></svg>

<div class="t" style="left:487.10px;top:981.89px;font-size:26px;line-height:1;letter-spacing:-0.395px;color:#8c8c8c;">dedahealth.en.alibaba.com</div></body>
</html>
